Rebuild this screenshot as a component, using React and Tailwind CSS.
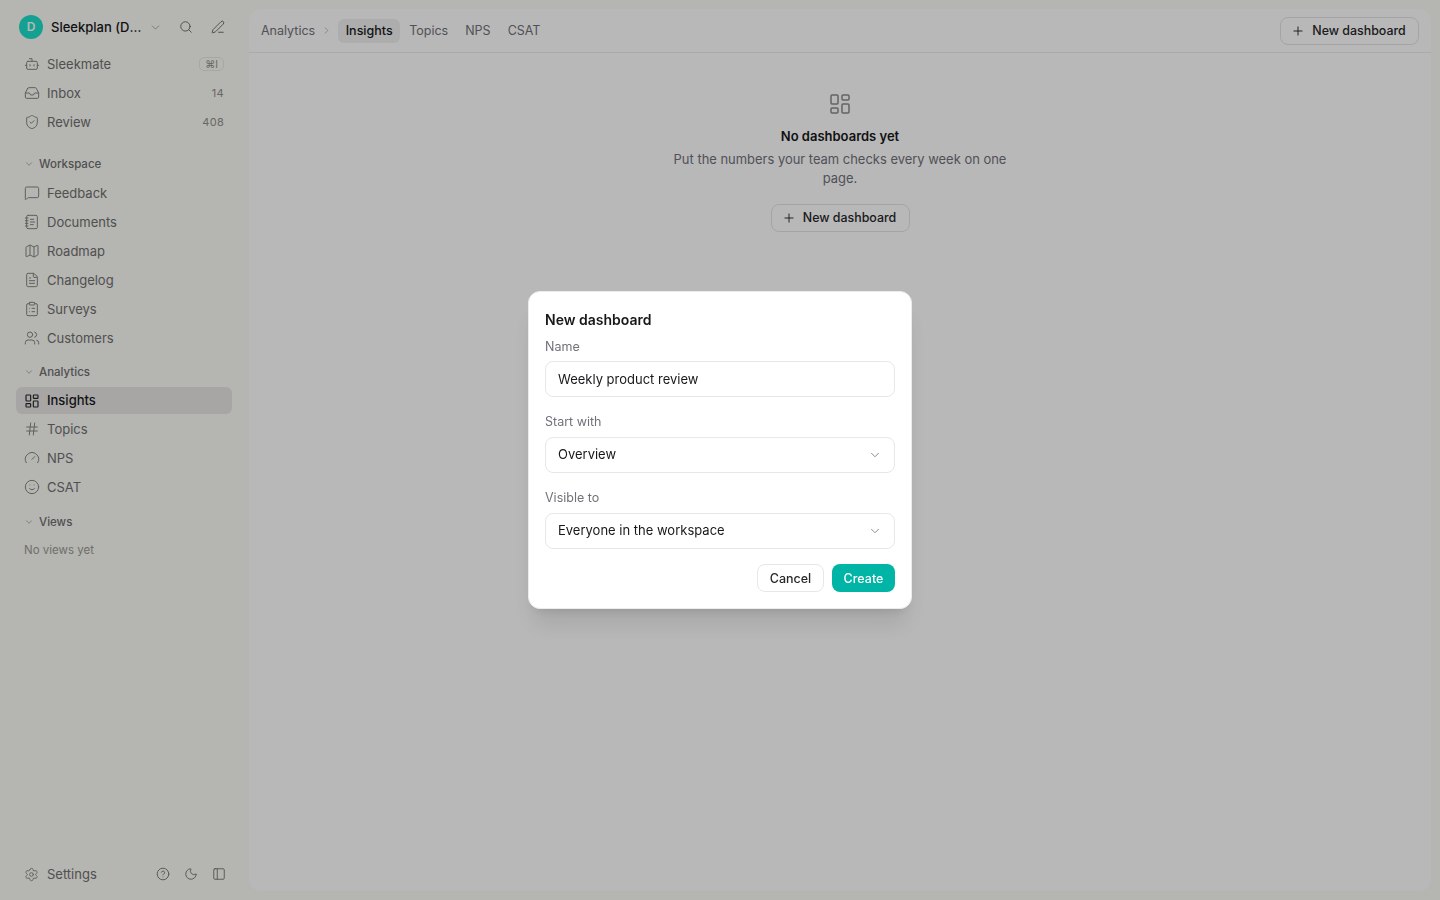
import {
  Bot, Inbox, ShieldCheck, MessageSquare, NotebookText, Map, FileText, ClipboardList, Users,
  LayoutDashboard, Hash, Gauge, Smile, Settings, CircleHelp, Moon, PanelLeft, Search, PenLine,
  Plus, ChevronDown, ChevronRight,
} from "lucide-react";

function NavRow({ icon: Icon, label, active, children }) {
  return (
    <div className={`flex items-center rounded-md pl-2 pr-2 text-[13px] ${active ? "h-[27px] bg-[#e9e7e5] font-medium text-[#18181b]" : "h-7 text-[#6f6f6f]"}`}>
      <Icon size={16} strokeWidth={active ? 1.75 : 1.5} className={`shrink-0 ${active ? "text-[#27272a]" : "text-[#85857f]"}`} />
      <span className={`ml-[7px] flex-1 ${active ? "" : "pt-0.5"}`}>{label}</span>
      {children}
    </div>
  );
}

function Group({ label }) {
  return (
    <div className="flex h-7 items-center pl-2 text-[11.5px] font-medium text-[#6f6f6f]">
      <ChevronDown size={10} strokeWidth={1.5} className="text-[#85857f]" />
      <span className="ml-[5px] pt-0.5">{label}</span>
    </div>
  );
}

function Count({ children }) {
  return <span className="text-[11px] tracking-wide text-[#8f8f8a]">{children}</span>;
}

function Sidebar() {
  return (
    <aside className="flex h-screen w-[248px] shrink-0 flex-col px-4">
      <div className="flex h-[50px] items-center pt-1 pl-[3px]">
        <div className="flex size-6 items-center justify-center rounded-full bg-[#1ce0c9] text-xs font-semibold text-white">D</div>
        <span className="ml-2 w-[92px] truncate pt-0.5 text-[13px] font-medium text-[#18181b]">Sleekplan (Dev)</span>
        <ChevronDown size={13} strokeWidth={1.5} className="ml-[6px] text-[#9a9a95]" />
        <Search size={14} strokeWidth={1.5} className="ml-[17px] text-[#5f5f5f]" />
        <PenLine size={14} strokeWidth={1.5} className="ml-[18px] text-[#5f5f5f]" />
      </div>
      <div className="flex flex-col gap-px">
        <NavRow icon={Bot} label="Sleekmate">
          <span className="flex h-[14px] w-[25px] items-center justify-center rounded-[5px] border border-[#e8e8e3] text-[10px] text-[#8f8f8a]">⌘I</span>
        </NavRow>
        <NavRow icon={Inbox} label="Inbox"><Count>14</Count></NavRow>
        <NavRow icon={ShieldCheck} label="Review"><Count>408</Count></NavRow>
      </div>
      <div className="mt-[14px] flex flex-col gap-px">
        <Group label="Workspace" />
        <NavRow icon={MessageSquare} label="Feedback" />
        <NavRow icon={NotebookText} label="Documents" />
        <NavRow icon={Map} label="Roadmap" />
        <NavRow icon={FileText} label="Changelog" />
        <NavRow icon={ClipboardList} label="Surveys" />
        <NavRow icon={Users} label="Customers" />
      </div>
      <div className="mt-[6px] flex flex-col gap-px">
        <Group label="Analytics" />
        <NavRow icon={LayoutDashboard} label="Insights" active />
        <NavRow icon={Hash} label="Topics" />
        <NavRow icon={Gauge} label="NPS" />
        <NavRow icon={Smile} label="CSAT" />
      </div>
      <div className="mt-[7px]">
        <Group label="Views" />
        <div className="flex h-7 items-center pl-2 pt-0.5 text-[11.5px] text-[#9a9a95]">No views yet</div>
      </div>
      <div className="mt-auto mb-3 flex h-7 items-center pl-2 pr-[6px] text-[13px] text-[#6f6f6f]">
        <Settings size={15} strokeWidth={1.5} className="text-[#85857f]" />
        <span className="ml-2 flex-1 pt-0.5">Settings</span>
        <CircleHelp size={14} strokeWidth={1.5} className="mr-[14px] text-[#6f6f6f]" />
        <Moon size={14} strokeWidth={1.5} className="mr-[14px] text-[#6f6f6f]" />
        <PanelLeft size={14} strokeWidth={1.5} className="text-[#6f6f6f]" />
      </div>
    </aside>
  );
}

function NewButton({ className, textClass = "" }) {
  return (
    <button className={`flex h-7 w-[139px] items-center justify-center gap-[7px] rounded-lg border border-[#e4e4e7] pr-0.5 text-[12.4px] font-medium text-[#27272a] ${className}`}>
      <Plus size={14} strokeWidth={1.5} className="text-[#18181b]" />
      <span className={textClass}>New dashboard</span>
    </button>
  );
}

function Main() {
  return (
    <main className="mt-[9px] mb-[9px] mr-[9px] ml-px flex flex-1 flex-col rounded-xl bg-white">
      <header className="flex h-[44px] items-center gap-px border-b border-[#ececec] pl-3 pr-3">
        <span className="pt-0.5 text-[12.5px] text-[#71717a]">Analytics</span>
        <ChevronRight size={11} strokeWidth={1.5} className="ml-[5px] mr-[5px] text-[#a1a1aa]" />
        <span className="flex h-6 w-[62px] items-center justify-center rounded-md bg-[#f0f0f0] pt-0.5 text-[12.5px] font-medium text-[#18181b]">Insights</span>
        <span className="px-2 pt-0.5 text-[12.5px] text-[#71717a]">Topics</span>
        <span className="px-2 pt-0.5 text-[12.5px] text-[#71717a]">NPS</span>
        <span className="px-2 pt-0.5 text-[12.5px] text-[#71717a]">CSAT</span>
        <NewButton className="ml-auto" textClass="pt-0.5" />
      </header>
      <section className="flex flex-col items-center pt-[39px]">
        <LayoutDashboard size={24} strokeWidth={1.5} className="text-[#8a8a8a]" />
        <h2 className="mt-[10px] text-[13px] leading-5 font-semibold text-[#18181b]">No dashboards yet</h2>
        <p className="mt-1 w-[340px] text-center text-[12.95px] leading-[19px] text-[#71717a]">
          Put the numbers your team checks every week on one page.
        </p>
        <NewButton className="mt-4" />
      </section>
    </main>
  );
}

function SelectBox({ value }) {
  return (
    <div className="flex h-9 items-center justify-between rounded-lg border border-[#e7e7e7] pl-3 pr-3 text-[13px] text-[#18181b]">
      {value}
      <ChevronDown size={14} strokeWidth={1.5} className="text-[#7a7a7a]" />
    </div>
  );
}

function Dialog() {
  return (
    <div className="fixed inset-0 flex items-center justify-center bg-black/[0.28]">
      <div className="w-96 rounded-xl border border-[#ececec] bg-white px-4 pt-[18px] pb-4 shadow-xl">
        <h3 className="text-sm leading-5 font-semibold text-[#18181b]">New dashboard</h3>
        <label className="mt-2 mb-[5px] block text-[12.5px] leading-[18px] text-[#71717a]">Name</label>
        <input
          readOnly
          value="Weekly product review"
          className="block h-9 w-full rounded-lg border border-[#e7e7e7] px-3 text-[13px] text-[#18181b] outline-none"
        />
        <label className="mt-4 mb-[6px] block text-[12.5px] leading-[18px] text-[#71717a]">Start with</label>
        <SelectBox value="Overview" />
        <label className="mt-4 mb-[6px] block text-[12.5px] leading-[18px] text-[#71717a]">Visible to</label>
        <SelectBox value="Everyone in the workspace" />
        <div className="mt-[15px] flex justify-end gap-2">
          <button className="h-7 w-[67px] rounded-lg border border-[#e7e7e7] pt-0.5 text-[12.5px] font-medium text-[#27272a]">Cancel</button>
          <button className="h-7 w-[63px] rounded-lg bg-[#00b5a5] pt-0.5 text-[12.5px] font-medium text-white">Create</button>
        </div>
      </div>
    </div>
  );
}

export default function App() {
  return (
    <div className="flex h-screen bg-[#fbfbf6] font-['Inter',sans-serif]">
      <Sidebar />
      <Main />
      <Dialog />
    </div>
  );
}
